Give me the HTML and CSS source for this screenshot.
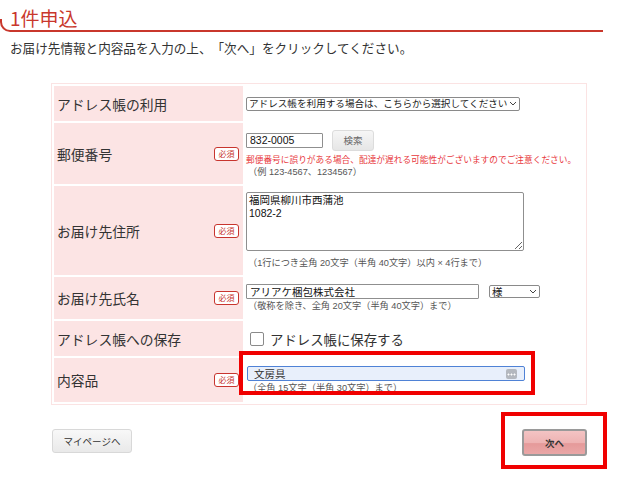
FILE: index.html
```html
<!DOCTYPE html>
<html lang="ja">
<head>
<meta charset="utf-8">
<title>1件申込</title>
<link rel="stylesheet" href="styles.css">
</head>
<body>
<div class="page">
  <h1 class="page-title">1件申込</h1>
  <p class="lead">お届け先情報と内容品を入力の上、「次へ」をクリックしてください。</p>

  <table class="form-table">
    <tr class="r1">
      <th><div class="lbl"><span>アドレス帳の利用</span></div></th>
      <td>
        <select class="sel sel-book">
          <option>アドレス帳を利用する場合は、こちらから選択してください</option>
        </select>
      </td>
    </tr>
    <tr class="r2">
      <th><div class="lbl"><span>郵便番号</span><span class="req">必須</span></div></th>
      <td>
        <div class="zip-line">
          <input class="txt txt-zip" type="text" value="832-0005">
          <button class="btn-search" type="button">検索</button>
        </div>
        <p class="warn">郵便番号に誤りがある場合、配達が遅れる可能性がございますのでご注意ください。</p>
        <p class="note">（例 123-4567、1234567）</p>
      </td>
    </tr>
    <tr class="r3">
      <th><div class="lbl"><span>お届け先住所</span><span class="req">必須</span></div></th>
      <td>
        <textarea class="area">福岡県柳川市西蒲池
1082-2</textarea>
        <p class="note note-area">（1行につき全角 20文字（半角 40文字）以内 × 4行まで）</p>
      </td>
    </tr>
    <tr class="r4">
      <th><div class="lbl"><span>お届け先氏名</span><span class="req">必須</span></div></th>
      <td>
        <div class="name-line">
          <input class="txt txt-name" type="text" value="アリアケ梱包株式会社">
          <select class="sel sel-hon"><option>様</option></select>
        </div>
        <p class="note">（敬称を除き、全角 20文字（半角 40文字）まで）</p>
      </td>
    </tr>
    <tr class="r5">
      <th><div class="lbl"><span>アドレス帳への保存</span></div></th>
      <td>
        <label class="chk"><span class="box"></span><span class="chk-text">アドレス帳に保存する</span></label>
      </td>
    </tr>
    <tr class="r6">
      <th><div class="lbl"><span>内容品</span><span class="req">必須</span></div></th>
      <td>
        <span class="goods-wrap">
          <input class="txt txt-goods" type="text" value="文房具">
          <span class="autofill"></span>
        </span>
        <p class="note note-goods">（全角 15文字（半角 30文字）まで）</p>
      </td>
    </tr>
  </table>

  <div class="actions">
    <button class="btn-mypage" type="button">マイページへ</button>
    <button class="btn-next" type="button">次へ</button>
  </div>

  <div class="mark mark-goods"></div>
  <div class="mark mark-next"></div>
</div>
</body>
</html>
```

FILE: styles.css
```css
html, body {
  margin: 0;
  padding: 0;
  background: #fff;
}
body {
  font-family: "Liberation Sans", "Noto Sans CJK JP", sans-serif;
  color: #333;
  text-spacing-trim: space-all;
}
.page {
  position: relative;
  width: 640px;
  height: 483px;
  overflow: hidden;
}
.page-title {
  position: relative;
  margin: 0;
  width: 603px;
  height: 32px;
  box-sizing: border-box;
  padding: 7px 0 0 10px;
  font-family: "Noto Sans CJK JP", sans-serif;
  font-size: 19px;
  line-height: 22px;
  font-weight: normal;
  color: #c9372c;
}
.page-title::after {
  content: "";
  position: absolute;
  left: 0;
  right: 0;
  bottom: 0;
  height: 11px;
  border-left: 2px solid #c9372c;
  border-bottom: 2px solid #c9372c;
  border-bottom-left-radius: 10px;
}
.lead {
  margin: 7px 0 0 10px;
  font-family: "Noto Sans CJK JP", sans-serif;
  font-size: 12.6px;
  line-height: 18px;
  color: #333;
  text-spacing-trim: space-all;
}
.form-table {
  margin: 26px 0 0 51px;
  width: 536px;
  border: 1px solid #fbe3e3;
  border-spacing: 2px;
  table-layout: fixed;
}
.form-table th {
  width: 189px;
  padding: 0 4px 0 3px;
  box-sizing: border-box;
  background: #fce4e4;
  text-align: left;
  font-weight: normal;
  vertical-align: middle;
}
.form-table td {
  padding: 0 0 0 1px;
  vertical-align: middle;
  background: #fff;
}
.r1 { height: 35px; }
.r2 { height: 61px; }
.r3 { height: 89px; }
.r4 { height: 42px; }
.r5 { height: 35px; }
.r6 { height: 44px; }
.lbl {
  display: flex;
  align-items: center;
  justify-content: space-between;
  font-family: "Noto Sans CJK JP", sans-serif;
  font-size: 13.8px;
  color: #333;
}
.req {
  display: inline-block;
  width: 25px;
  height: 14px;
  box-sizing: border-box;
  border: 1.5px solid #c8352e;
  border-radius: 3px;
  background: #fff;
  color: #c8352e;
  font-size: 8px;
  line-height: 11px;
  text-align: center;
}
.sel {
  appearance: none;
  -webkit-appearance: none;
  margin: 0;
  height: 14px;
  padding: 0 10px 0 2px;
  border: 1px solid #8a8a8a;
  border-radius: 2px;
  background-color: #fff;
  background-image: url("data:image/svg+xml,%3Csvg xmlns='http://www.w3.org/2000/svg' width='8' height='5'%3E%3Cpath d='M1 1l3 3 3-3' fill='none' stroke='%23444' stroke-width='1'/%3E%3C/svg%3E");
  background-repeat: no-repeat;
  background-position: right 2px center;
  font-family: "Liberation Sans", "Noto Sans CJK JP", sans-serif;
  font-size: 9.6px;
  line-height: 12px;
  color: #222;
  display: block;
}
.sel-book { width: 274px; }
.sel-hon { width: 51px; height: 13px; margin-left: 10px; font-size: 10.5px; }
.txt {
  margin: 0;
  height: 15px;
  box-sizing: border-box;
  padding: 0 3px;
  border: 1px solid #8f8f8f;
  border-radius: 1px;
  background: #fff;
  font-family: "Liberation Sans", "Noto Sans CJK JP", sans-serif;
  font-size: 10.5px;
  color: #111;
  outline: none;
}
.zip-line, .name-line {
  display: flex;
  align-items: center;
}
.txt-zip { width: 77px; }
.btn-search {
  margin: 0 0 0 9px;
  width: 42px;
  height: 21px;
  padding: 0;
  border: 1px solid #dcdcdc;
  border-radius: 3px;
  background: linear-gradient(#f6f6f6, #e6e6e6);
  font-family: "Noto Sans CJK JP", sans-serif;
  font-size: 9.5px;
  color: #666;
}
.warn {
  margin: 3px 0 0 0;
  font-family: "Noto Sans CJK JP", sans-serif;
  font-size: 8.7px;
  line-height: 11px;
  color: #e8383d;
  white-space: nowrap;
}
.note {
  margin: 2px 0 0 2px;
  font-family: "Liberation Sans", "Noto Sans CJK JP", sans-serif;
  font-size: 9.2px;
  line-height: 11px;
  color: #555;
  white-space: nowrap;
}
.area {
  display: block;
  margin: 0;
  width: 278px;
  height: 59px;
  box-sizing: border-box;
  padding: 1px 2px;
  border: 1px solid #8f8f8f;
  border-radius: 2px;
  font-family: "Liberation Sans", "Noto Sans CJK JP", sans-serif;
  font-size: 10.5px;
  line-height: 13px;
  color: #111;
  resize: vertical;
  outline: none;
}
.note-area { margin-top: 7px; margin-left: 2px; }
.txt-name { width: 233px; }
.chk {
  display: flex;
  align-items: center;
  margin-left: 4px;
}
.box {
  display: inline-block;
  width: 14px;
  height: 14px;
  box-sizing: border-box;
  border: 1px solid #8a8a8a;
  border-radius: 2px;
  background: #fff;
}
.chk-text {
  margin-left: 6px;
  font-family: "Noto Sans CJK JP", sans-serif;
  font-size: 13.4px;
  line-height: 18px;
  color: #333;
}
.goods-wrap {
  position: relative;
  display: block;
  width: 278px;
  margin-left: 1px;
}
.txt-goods {
  display: block;
  width: 278px;
  padding-left: 6px;
  background: #e8effb;
  border: 1.5px solid #4f82d6;
  border-radius: 2px;
  color: #333;
}
.autofill {
  position: absolute;
  right: 8px;
  top: 3px;
  width: 11px;
  height: 10px;
  border-radius: 2px;
  background-color: #b4b8bf;
  background-image:
    radial-gradient(circle, #fff 0.9px, transparent 1.1px),
    radial-gradient(circle, #fff 0.9px, transparent 1.1px),
    radial-gradient(circle, #fff 0.9px, transparent 1.1px);
  background-size: 3px 3px;
  background-repeat: no-repeat;
  background-position: 1px 4px, 4px 4px, 7px 4px;
}
.note-goods { margin-top: 2px; margin-left: 2px; }
.actions {
  display: flex;
  justify-content: space-between;
  align-items: flex-start;
  width: 536px;
  margin: 24px 0 0 51px;
}
.btn-mypage {
  margin: 0 0 0 1px;
  width: 80px;
  height: 24px;
  padding: 0;
  border: 1px solid #d8d8d8;
  border-radius: 3px;
  background: linear-gradient(#f8f8f8, #e9e9e9);
  font-family: "Noto Sans CJK JP", sans-serif;
  font-size: 9.5px;
  color: #333;
}
.btn-next {
  margin: 0;
  width: 65px;
  height: 27px;
  padding: 0;
  border: 2px solid #9a9a9a;
  border-radius: 3px;
  background: linear-gradient(#f3c4c4 0%, #eeb3b3 50%, #e59a9a 55%, #eaa7a7 100%);
  font-family: "Noto Sans CJK JP", sans-serif;
  font-size: 9.5px;
  font-weight: bold;
  color: #333;
}
.mark {
  position: absolute;
  box-sizing: border-box;
  border: 4px solid #f00000;
}
.mark-goods {
  left: 239px;
  top: 351px;
  width: 296px;
  height: 44px;
}
.mark-next {
  left: 501px;
  top: 412px;
  width: 106px;
  height: 57px;
}
```
